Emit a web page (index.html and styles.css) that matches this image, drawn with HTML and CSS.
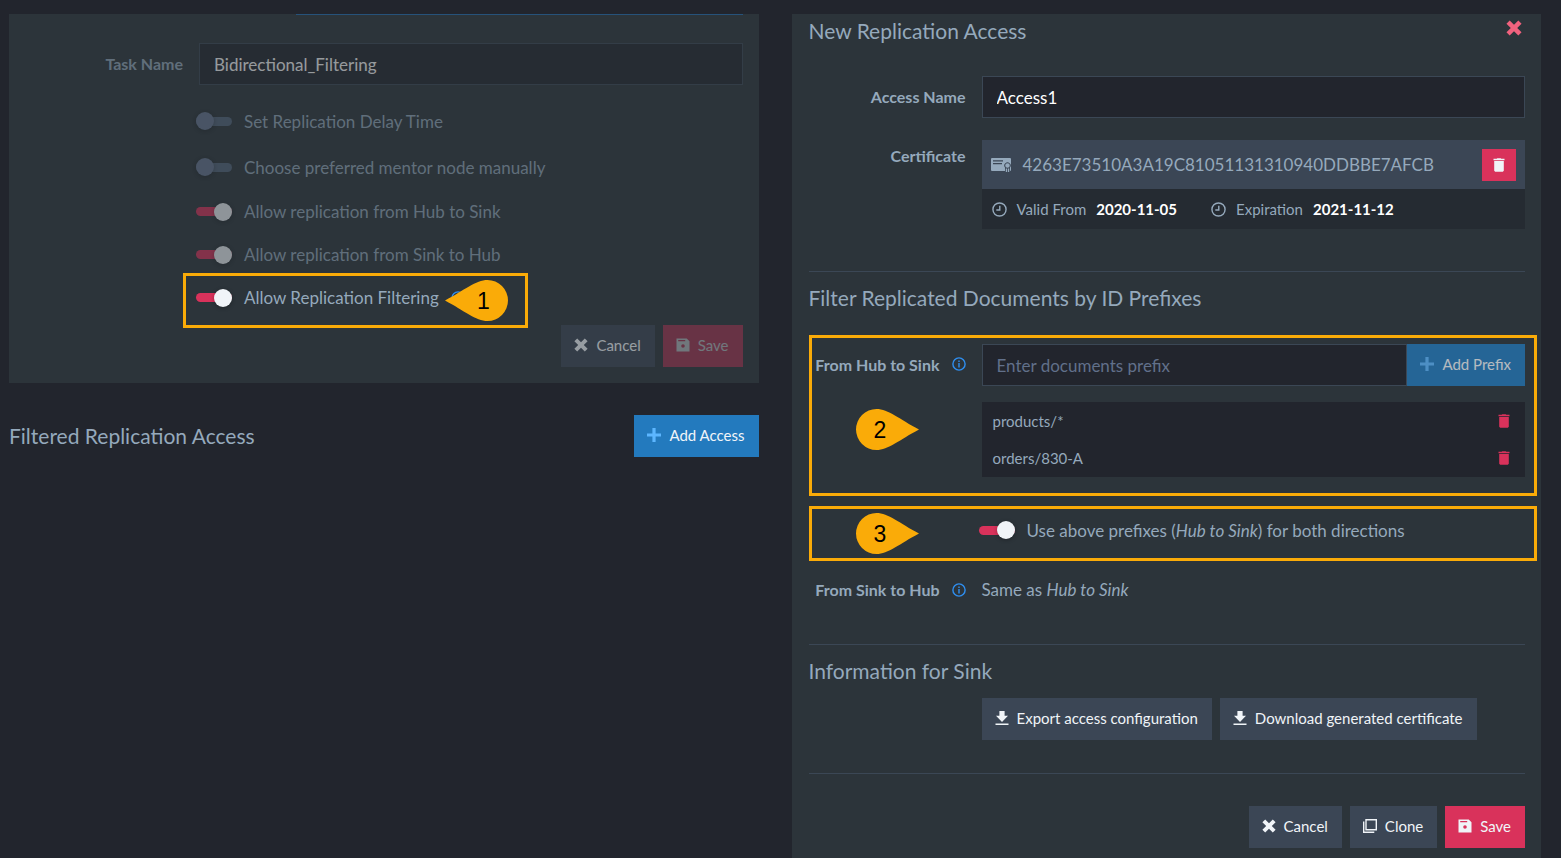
FILE: index.html
```html
<!DOCTYPE html>
<html lang="en">
	<head>
		<meta charset="UTF-8" />
		<meta name="viewport" content="width=device-width, initial-scale=1.0" />
		<title>Replication Access</title>
		<link rel="stylesheet" href="styles.css">
	</head>
	<body>
		<svg class="sprite" aria-hidden="true">
			<symbol id="i-close" viewBox="0 0 14 14"><path d="M3.2 0.4 7 4.2 10.8 0.4 13.6 3.2 9.8 7 13.6 10.8 10.8 13.6 7 9.8 3.2 13.6 0.4 10.8 4.2 7 0.4 3.2z" /></symbol>
			<symbol id="i-save" viewBox="0 0 14 14"><path fill-rule="evenodd" d="M0.5 0.5h10.2l2.8 2.8v10.2h-13zM2.2 2v1.3h7V2zM7 6.2a1.8 1.8 0 1 0 0 3.6a1.8 1.8 0 1 0 0-3.6z" /></symbol>
			<symbol id="i-plus" viewBox="0 0 14 14"><path d="M5.4 0h3.2v5.4H14v3.2H8.6V14H5.4V8.6H0V5.4h5.4z" /></symbol>
			<symbol id="i-trash" viewBox="0 0 14 14"><path d="M1.5 .8h3.200l.6-.6h3.400l.6.6h3.200v1.400h-11zM2.200 3h9.600v9.800l-1 1H3.200l-1-1z" /></symbol>
			<symbol id="i-download" viewBox="0 0 14 14"><path d="M4.4 0h5.2v4.8H13L7 11 1 4.8h3.4zM.5 12.4h13V14H.5z" /></symbol>
			<symbol id="i-clone" viewBox="0 0 14 14"><path fill="none" stroke="currentColor" stroke-width="1.4" d="M3 .8h10.3v10H3zM.7 2.5v10.8h10.6" /></symbol>
			<symbol id="i-clock" viewBox="0 0 16 16"><path fill="none" stroke="currentColor" stroke-width="1.5" d="M8 1a7 7 0 1 0 0 14a7 7 0 1 0 0-14zM8.3 4v4.6H4.6" /></symbol>
			<symbol id="i-info" viewBox="0 0 14 14"><path fill="none" stroke="currentColor" stroke-width="1.4" d="M7 .9a6.1 6.1 0 1 0 0 12.2a6.1 6.1 0 1 0 0-12.2z" /><path d="M6.3 3.6h1.4V5H6.3zM6.3 6h1.4v4.4H6.3z" /></symbol>
			<symbol id="i-cert" viewBox="0 0 20 14"><path fill-rule="evenodd" d="M1 0h18a1 1 0 0 1 1 1v11a1 1 0 0 1-1 1V9.500a3.200 3.200 0 1 0-5 0V13H1a1 1 0 0 1-1-1V1a1 1 0 0 1 1-1zM2 2.200v1.300h10V2.200zM2 5v1.300h9V5z" /><path d="M16.500 5.200a2.300 2.300 0 1 0 0 4.600a2.300 2.300 0 1 0 0-4.600zM14.800 10.400h1.300V14h-1.300zM16.900 10.400h1.300V14h-1.300z" /></symbol>
			<symbol id="i-pin" viewBox="0 0 63 41"><path d="M20.5 0C32 0 44 10.5 63 20.5 44 30.5 32 41 20.5 41A20.5 20.5 0 0 1 20.5 0z" /></symbol>
		</svg>

		<main class="layout">
			<div class="column">
				<form class="panel task">
					<div class="tab-line"></div>
					<div class="field dimmed">
						<label class="field-label" for="task_name">Task Name</label>
						<input class="text-input" type="text" id="task_name" value="Bidirectional_Filtering" />
					</div>
					<div class="toggles">
						<label class="toggle toggle-tall dimmed"><input class="switch" type="checkbox" /> Set Replication Delay Time</label>
						<label class="toggle toggle-tall dimmed"><input class="switch" type="checkbox" /> Choose preferred mentor node manually</label>
						<label class="toggle dimmed"><input class="switch" type="checkbox" checked /> Allow replication from Hub to Sink</label>
						<label class="toggle dimmed"><input class="switch" type="checkbox" checked /> Allow replication from Sink to Hub</label>
						<div class="marked">
							<label class="toggle"><input class="switch" type="checkbox" checked /> Allow Replication Filtering</label>
							<svg class="icon info"><use href="#i-info" /></svg>
							<span class="highlight highlight-1"></span>
							<span class="pin pin-1"><svg class="pin-shape"><use href="#i-pin" /></svg><span class="pin-num">1</span></span>
						</div>
					</div>
					<div class="actions">
						<button class="btn btn-muted" type="button"><svg class="icon"><use href="#i-close" /></svg>Cancel</button>
						<button class="btn btn-danger btn-off" type="button"><svg class="icon"><use href="#i-save" /></svg>Save</button>
					</div>
				</form>

				<div class="list-header">
					<h2 class="title">Filtered Replication Access</h2>
					<button class="btn btn-primary" type="button"><svg class="icon"><use href="#i-plus" /></svg>Add Access</button>
				</div>
			</div>

			<form class="panel access">
				<section class="section section-first">
					<div class="section-head">
						<h2 class="title">New Replication Access</h2>
						<button class="btn-close" type="button" aria-label="Close"><svg class="icon"><use href="#i-close" /></svg></button>
					</div>
					<div class="field">
						<label class="field-label" for="access_name">Access Name</label>
						<input class="text-input" type="text" id="access_name" value="Access1" />
					</div>
					<div class="field field-cert">
						<span class="field-label">Certificate</span>
						<div class="cert">
							<div class="cert-head">
								<svg class="icon-cert"><use href="#i-cert" /></svg>
								<span class="cert-hash">4263E73510A3A19C81051131310940DDBBE7AFCB</span>
								<button class="btn-trash" type="button" aria-label="Delete certificate"><svg class="icon"><use href="#i-trash" /></svg></button>
							</div>
							<div class="cert-info">
								<span class="cert-date"><svg class="icon-clock"><use href="#i-clock" /></svg>Valid From <strong>2020-11-05</strong></span>
								<span class="cert-date"><svg class="icon-clock"><use href="#i-clock" /></svg>Expiration <strong>2021-11-12</strong></span>
							</div>
						</div>
					</div>
				</section>

				<section class="section">
					<h2 class="title">Filter Replicated Documents by ID Prefixes</h2>
					<div class="field marked field-prefix">
						<label class="field-label" for="prefix">From Hub to Sink <svg class="icon info"><use href="#i-info" /></svg></label>
						<div>
							<div class="input-group">
								<input class="text-input" type="text" id="prefix" placeholder="Enter documents prefix" />
								<button class="btn btn-primary btn-dim" type="button"><svg class="icon"><use href="#i-plus" /></svg>Add Prefix</button>
							</div>
							<ul class="prefixes">
								<li class="prefix">products/*<button class="btn-remove" type="button" aria-label="Remove products/*"><svg class="icon"><use href="#i-trash" /></svg></button></li>
								<li class="prefix">orders/830-A<button class="btn-remove" type="button" aria-label="Remove orders/830-A"><svg class="icon"><use href="#i-trash" /></svg></button></li>
							</ul>
						</div>
						<span class="highlight highlight-2"></span>
						<span class="pin pin-2"><svg class="pin-shape"><use href="#i-pin" /></svg><span class="pin-num">2</span></span>
					</div>
					<div class="field marked field-both">
						<label class="toggle toggle-both"><input class="switch" type="checkbox" checked /> <span>Use above prefixes (<i>Hub to Sink</i>) for both directions</span></label>
						<span class="highlight highlight-3"></span>
						<span class="pin pin-3"><svg class="pin-shape"><use href="#i-pin" /></svg><span class="pin-num">3</span></span>
					</div>
					<div class="field field-same">
						<span class="field-label">From Sink to Hub <svg class="icon info"><use href="#i-info" /></svg></span>
						<span class="same">Same as <i>Hub to Sink</i></span>
					</div>
				</section>

				<section class="section section-info">
					<h2 class="title">Information for Sink</h2>
					<div class="downloads">
						<button class="btn btn-muted" type="button"><svg class="icon"><use href="#i-download" /></svg>Export access configuration</button>
						<button class="btn btn-muted" type="button"><svg class="icon"><use href="#i-download" /></svg>Download generated certificate</button>
					</div>
				</section>

				<div class="section section-actions">
					<button class="btn btn-muted" type="button"><svg class="icon"><use href="#i-close" /></svg>Cancel</button>
					<button class="btn btn-muted" type="button"><svg class="icon"><use href="#i-clone" /></svg>Clone</button>
					<button class="btn btn-danger" type="button"><svg class="icon"><use href="#i-save" /></svg>Save</button>
				</div>
			</form>
		</main>
	</body>
</html>
```
FILE: styles.css
```css
* {
	box-sizing: border-box;
	margin: 0;
	padding: 0;
}

body {
	background-color: #22252d;
	color: #95a9bc;
	font-family: Lato, "Liberation Sans", sans-serif;
	font-size: 17px;
}

button,
input {
	font-family: inherit;
}

button {
	border: 0;
	cursor: pointer;
}

.sprite {
	display: none;
}

.icon {
	flex: none;
	width: 14px;
	height: 14px;
	fill: currentColor;
}

.layout {
	display: grid;
	grid-template-columns: 1fr 1fr;
	gap: 33px;
	min-height: 100vh;
	padding: 14px 20px 0 9px;
}

.panel {
	padding: 0 16px 0 17px;
	background-color: #2c343a;
}

.task {
	padding-bottom: 16px;
}

.tab-line {
	height: 1px;
	margin: 0 0 28px 270px;
	background-color: #26527a;
}

.dimmed {
	opacity: 0.5;
}

.title {
	color: #95a9bc;
	font-size: 21px;
	font-weight: 400;
	line-height: 34px;
}

/* form rows */
.field {
	display: grid;
	grid-template-columns: 157px 1fr;
	column-gap: 16px;
}

.field-label {
	display: flex;
	justify-content: flex-end;
	align-items: center;
	height: 40px;
	font-size: 16px;
	font-weight: 700;
	white-space: nowrap;
}

.info {
	margin-left: 12px;
	color: #2f8ff0;
}

.text-input {
	width: 100%;
	height: 42px;
	padding: 0 14px;
	border: 1px solid #3b4755;
	background-color: #22252d;
	color: #fff;
	font-size: 17px;
}

.text-input::placeholder {
	color: #61708a;
	opacity: 1;
}

/* toggles */
.toggles {
	padding: 13px 0 6px 170px;
}

.toggle {
	display: flex;
	align-items: center;
	gap: 12px;
	height: 43px;
}

.toggle-tall {
	height: 46px;
}

.switch {
	appearance: none;
	flex: none;
	display: flex;
	align-items: center;
	width: 36px;
	height: 9px;
	border-radius: 5px;
	background-color: #53647a;
}

.switch::before {
	content: "";
	flex: none;
	width: 18px;
	height: 18px;
	border-radius: 50%;
	background-color: #667590;
	box-shadow: 0 1px 4px rgba(0, 0, 0, 0.3);
}

.switch:checked {
	justify-content: flex-end;
	background-color: #d9325b;
}

.switch:checked::before {
	background-color: #f0f4f8;
}

/* buttons */
.btn {
	display: flex;
	align-items: center;
	gap: 8px;
	height: 42px;
	padding: 0 14px 2px 13px;
	color: #f0f4f8;
	font-size: 15px;
	white-space: nowrap;
}

.btn-muted {
	background-color: #3b4655;
}

.btn-danger {
	background-color: #d9325b;
}

.btn-primary {
	background-color: #237abe;
}

.btn-primary .icon {
	color: #5cb6ff;
}

.btn-dim {
	opacity: 0.7;
}

.btn-off {
	opacity: 0.35;
}

.actions,
.section-actions {
	display: flex;
	justify-content: flex-end;
	gap: 8px;
}

.actions .btn-muted {
	opacity: 0.55;
}

.list-header {
	display: flex;
	justify-content: space-between;
	align-items: center;
	margin-top: 32px;
}

/* access panel */
.section {
	padding: 9px 0 37px;
	border-top: 1px solid #3b4755;
}

.section-first {
	padding: 0 0 42px;
	border-top: 0;
}

.section-head {
	display: flex;
	justify-content: space-between;
	align-items: center;
	margin-bottom: 28px;
}

.btn-close {
	display: flex;
	padding: 0 3px 6px;
	background: none;
	color: #f0627e;
}

.btn-close .icon {
	width: 16px;
	height: 16px;
}

.field-cert {
	margin-top: 22px;
}

.field-cert .field-label {
	height: 30px;
}

.cert-head {
	display: flex;
	align-items: center;
	height: 49px;
	padding: 0 9px;
	background-color: #3b4655;
}

.icon-cert {
	width: 20px;
	height: 14px;
	fill: currentColor;
}

.cert-hash {
	margin: 0 auto 0 12px;
}

.btn-trash {
	display: flex;
	justify-content: center;
	align-items: center;
	width: 34px;
	height: 32px;
	background-color: #d9325b;
	color: #f0f4f8;
}

.cert-info {
	display: flex;
	gap: 34px;
	height: 40px;
	padding: 0 10px;
	background-color: #252b32;
	font-size: 15px;
}

.cert-date {
	display: flex;
	align-items: center;
	gap: 10px;
}

.cert-date strong {
	color: #fff;
}

.icon-clock {
	width: 15px;
	height: 15px;
}

.field-prefix {
	margin-top: 29px;
}

.input-group {
	display: flex;
}

.prefixes {
	margin-top: 16px;
	padding-bottom: 1px;
	background-color: #22252d;
	list-style: none;
}

.prefix {
	display: flex;
	justify-content: space-between;
	align-items: center;
	height: 37px;
	padding: 0 14px 0 11px;
	font-size: 15px;
}

.btn-remove {
	display: flex;
	background: none;
	color: #d9325b;
}

.field-both {
	margin-top: 36px;
}

.toggle-both {
	grid-column: 2;
	height: 34px;
	margin-left: -3px;
}

.field-same {
	margin-top: 26px;
}

.field-same .field-label,
.same {
	height: 34px;
	line-height: 34px;
}

.section-info {
	padding-bottom: 33px;
}

.downloads {
	display: flex;
	gap: 8px;
	margin-top: 10px;
	padding-left: 173px;
}

.section-actions {
	padding: 32px 0 10px;
}

/* callouts drawn over the form */
.marked {
	position: relative;
}

.toggles .marked {
	display: flex;
	align-items: center;
}

.highlight {
	position: absolute;
	border: 3px solid #faab08;
	pointer-events: none;
}

.highlight-1 {
	top: -3px;
	left: -13px;
	width: 345px;
	height: 55px;
}

.highlight-2 {
	inset: -9px -12px -19px 0;
}

.highlight-3 {
	inset: -7px -12px -14px 0;
}

.pin {
	position: absolute;
	width: 63px;
	height: 41px;
	color: #000;
	font-family: "Liberation Sans", Arial, sans-serif;
	font-size: 23px;
	line-height: 43px;
	text-align: center;
}

.pin-shape {
	position: absolute;
	inset: 0;
	width: 63px;
	height: 41px;
	fill: #faab08;
}

.pin-num {
	position: relative;
	display: block;
	padding-right: 14px;
}

.pin-1 {
	top: 4px;
	left: 249px;
}

.pin-1 .pin-shape {
	transform: scaleX(-1);
}

.pin-1 .pin-num {
	padding: 0 0 0 14px;
}

.pin-2 {
	top: 65px;
	left: 47px;
}

.pin-3 {
	top: 0;
	left: 47px;
}
```
